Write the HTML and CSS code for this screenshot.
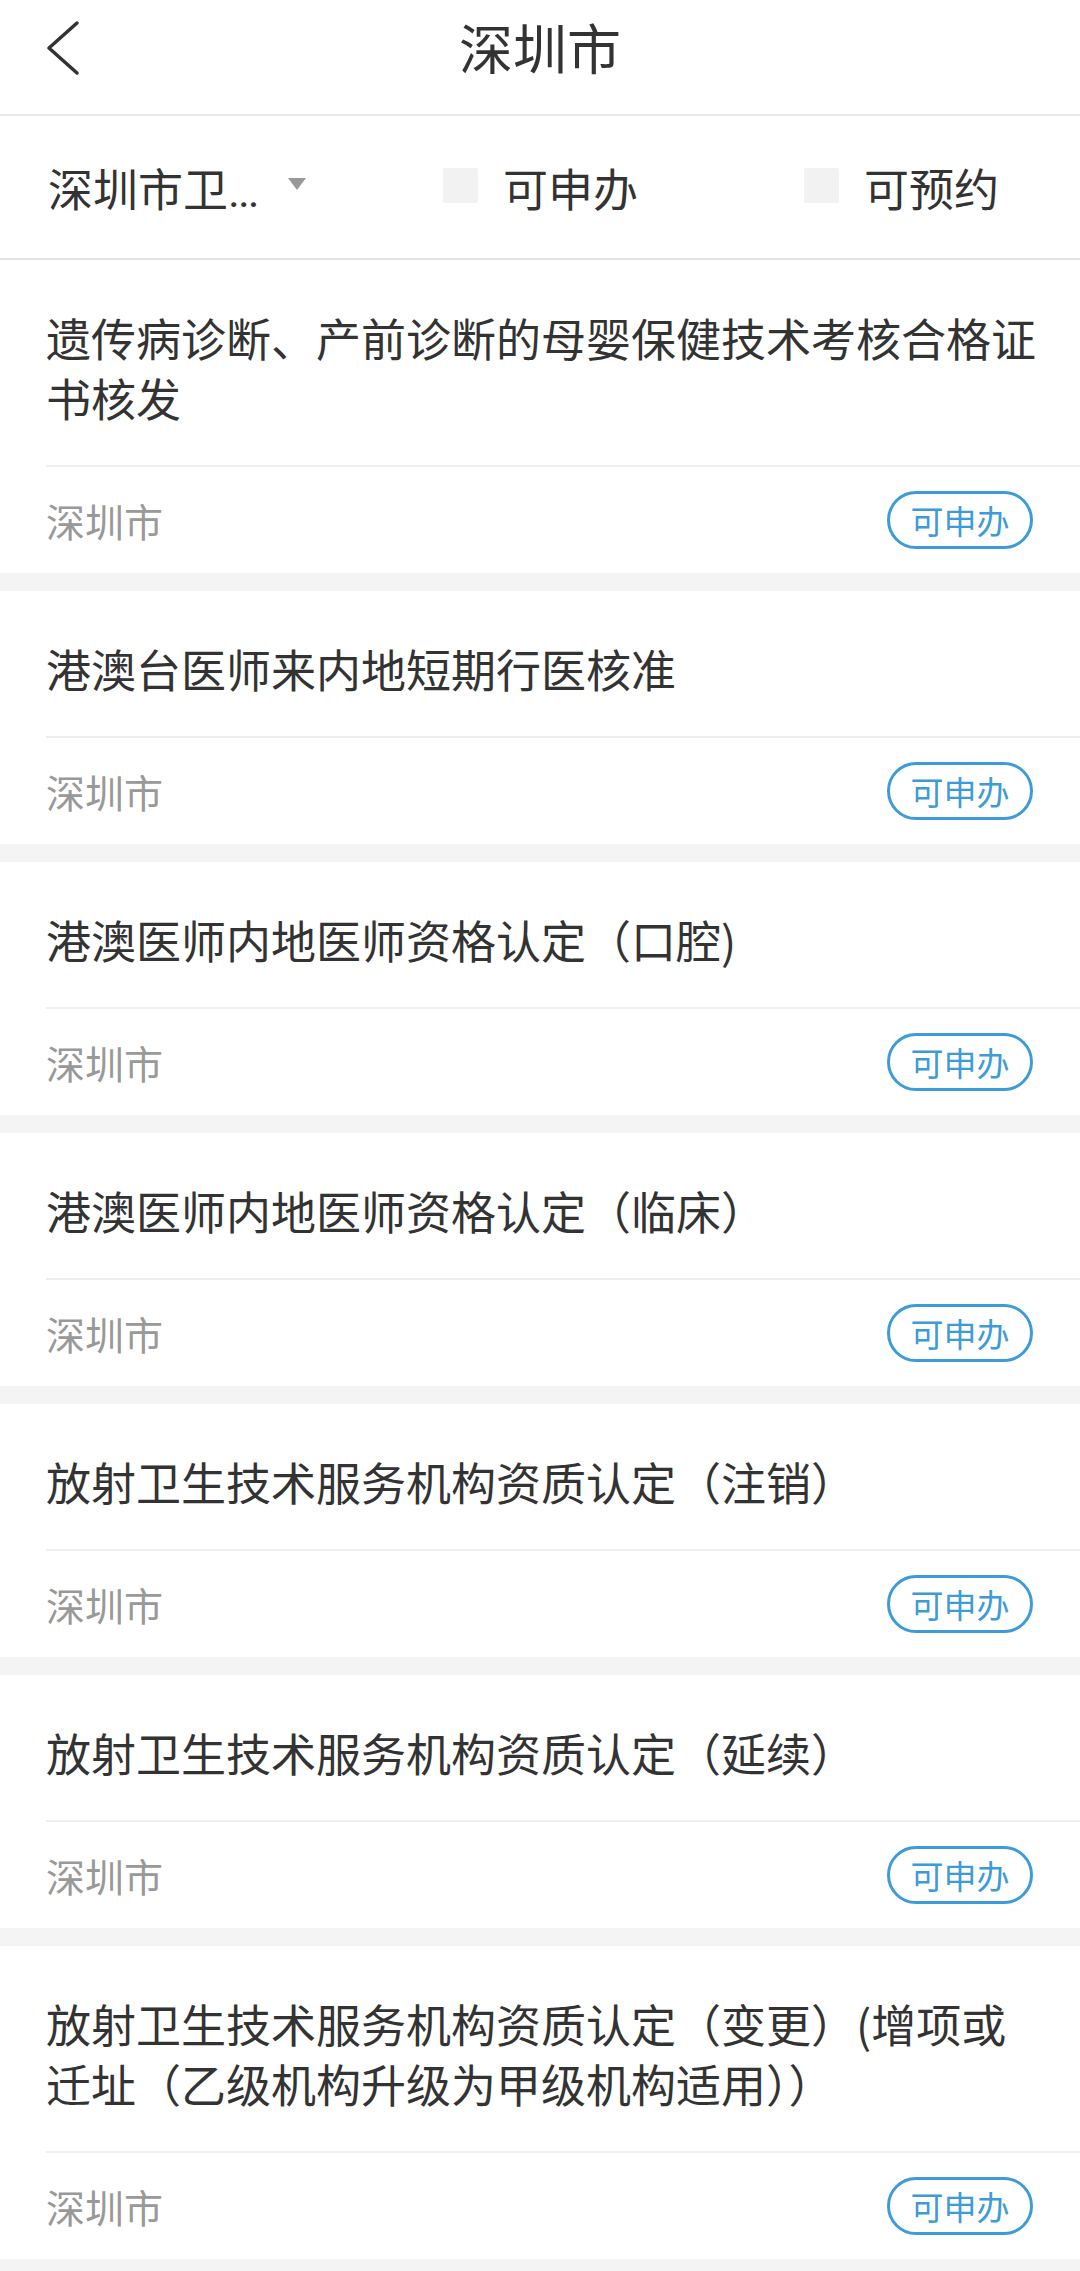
FILE: index.html
```html
<!DOCTYPE html>
<html>
<head>
	<meta name="viewport" content="width=device-width, initial-scale=1">
	<title>深圳市</title>
<link rel="stylesheet" href="styles.css">
</head>
<body>

<div class="topbar">
	<div class="back">
		<svg width="36" height="56" viewBox="0 0 36 56"><path d="M32 3 L4 28 L32 53" fill="none" stroke="#333" stroke-width="3.5" stroke-linecap="round" stroke-linejoin="round"/></svg>
	</div>
	<h1 class="title">深圳市</h1>
	<div></div>
</div>

<div class="filters">
	<div class="drop">
		<span class="drop_text">深圳市卫<span class="dots">...</span></span>
		<svg class="arrow" width="18" height="12" viewBox="0 0 18 12"><path d="M0 0 L18 0 L9 12 Z" fill="#999"/></svg>
	</div>
	<div class="check"><span class="box"></span>可申办</div>
	<div class="check check2"><span class="box"></span>可预约</div>
</div>

<div class="list">
	<div class="item">
		<div class="item_title">遗传病诊断、产前诊断的母婴保健技术考核合格证书核发</div>
		<div class="item_foot"><span class="area">深圳市</span><span class="tag">可申办</span></div>
	</div>
	<div class="item">
		<div class="item_title">港澳台医师来内地短期行医核准</div>
		<div class="item_foot"><span class="area">深圳市</span><span class="tag">可申办</span></div>
	</div>
	<div class="item">
		<div class="item_title">港澳医师内地医师资格认定（口腔)</div>
		<div class="item_foot"><span class="area">深圳市</span><span class="tag">可申办</span></div>
	</div>
	<div class="item">
		<div class="item_title">港澳医师内地医师资格认定（临床）</div>
		<div class="item_foot"><span class="area">深圳市</span><span class="tag">可申办</span></div>
	</div>
	<div class="item">
		<div class="item_title">放射卫生技术服务机构资质认定（注销）</div>
		<div class="item_foot"><span class="area">深圳市</span><span class="tag">可申办</span></div>
	</div>
	<div class="item">
		<div class="item_title">放射卫生技术服务机构资质认定（延续）</div>
		<div class="item_foot"><span class="area">深圳市</span><span class="tag">可申办</span></div>
	</div>
	<div class="item">
		<div class="item_title">放射卫生技术服务机构资质认定（变更）(增项或迁址（乙级机构升级为甲级机构适用））</div>
		<div class="item_foot"><span class="area">深圳市</span><span class="tag">可申办</span></div>
	</div>
</div>

</body>
</html>
```

FILE: styles.css
```css
body{
	font-family: "Noto Sans CJK SC", "Noto Sans", sans-serif;
	color: #333;
	background-color: #f4f4f4;
	margin: 0;
	padding: 0;
}

.topbar{
	display: grid;
	grid-template-columns: 1fr auto 1fr;
	align-items: start;
	height: 94px;
	padding-top: 20px;
	background-color: white;
	border-bottom: 2px solid #e8e8e8;
}
.back{
	padding-left: 45px;
}
.back svg{
	display: block;
}
.title{
	margin: 0;
	font-size: 54px;
	line-height: 54px;
	font-weight: normal;
	color: #333;
}

.filters{
	display: flex;
	align-items: center;
	height: 142px;
	padding-left: 48px;
	background-color: white;
	border-bottom: 2px solid #e2e2e2;
	font-size: 45px;
}
.drop{
	display: flex;
	align-items: center;
	width: 395px;
}
.dots{
	font-family: Roboto, sans-serif;
	letter-spacing: -2px;
}
.arrow{
	margin-left: 30px;
	margin-top: -6px;
}
.check{
	display: flex;
	align-items: center;
}
.check2{
	margin-left: 166px;
}
.box{
	width: 35px;
	height: 35px;
	background-color: #f2f2f2;
	border-radius: 2px;
	margin-right: 25px;
	margin-top: -4px;
}

.item{
	background-color: white;
	margin-bottom: 18px;
}
.item_title{
	margin-left: 46px;
	padding: 48px 40px 37px 0;
	font-size: 45px;
	line-height: 60px;
	color: #333;
	border-bottom: 2px solid #efefef;
}
.item_foot{
	display: flex;
	align-items: center;
	justify-content: space-between;
	height: 106px;
	padding: 0 47px 0 46px;
}
.area{
	font-size: 39px;
	color: #999;
}
.tag{
	box-sizing: border-box;
	width: 146px;
	height: 58px;
	border: 3px solid #3d9bd8;
	border-radius: 29px;
	color: #3d9bd8;
	font-size: 33px;
	line-height: 52px;
	text-align: center;
}
```
